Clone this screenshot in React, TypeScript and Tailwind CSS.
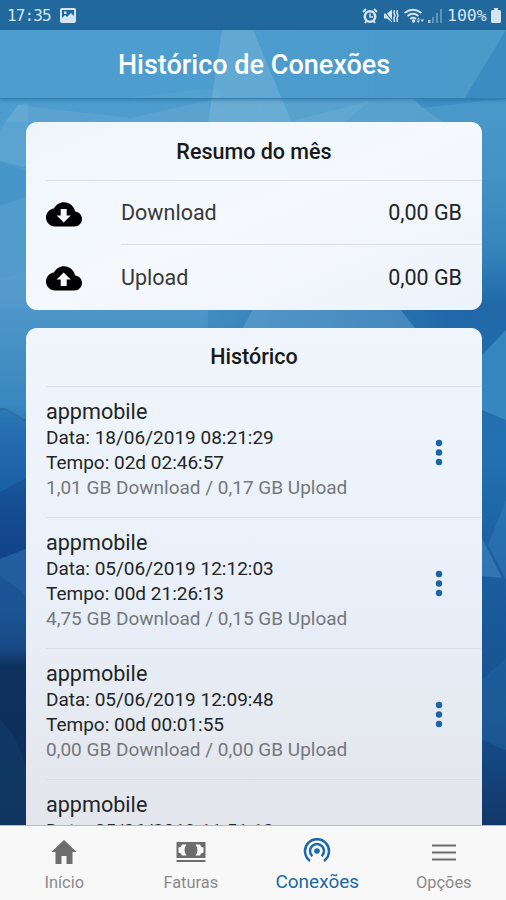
import React, { useState } from "react";

type Session = {
  user: string;
  date: string;
  time: string;
  down: string;
  up: string;
};

const sessions: Session[] = [
  { user: "appmobile", date: "18/06/2019 08:21:29", time: "02d 02:46:57", down: "1,01", up: "0,17" },
  { user: "appmobile", date: "05/06/2019 12:12:03", time: "00d 21:26:13", down: "4,75", up: "0,15" },
  { user: "appmobile", date: "05/06/2019 12:09:48", time: "00d 00:01:55", down: "0,00", up: "0,00" },
  { user: "appmobile", date: "05/06/2019 11:51:12", time: "00d 00:08:10", down: "0,00", up: "0,00" },
];

// Low-poly blue wallpaper behind the whole screen
const Wallpaper = () => (
  <svg
    className="absolute inset-0 w-full h-full"
    viewBox="0 0 506 900"
    preserveAspectRatio="none"
  >
    <defs>
      <linearGradient id="left" x1="0" y1="0" x2="0" y2="1">
        <stop offset="0.1" stopColor="#4d9dce" />
        <stop offset="0.3" stopColor="#529bcb" />
        <stop offset="0.36" stopColor="#4a94c7" />
        <stop offset="0.45" stopColor="#3987bf" />
        <stop offset="0.48" stopColor="#2a73b3" />
        <stop offset="0.54" stopColor="#1f62a6" />
        <stop offset="0.6" stopColor="#1b5698" />
        <stop offset="0.68" stopColor="#1a5493" />
        <stop offset="0.72" stopColor="#174a85" />
        <stop offset="0.74" stopColor="#0e325e" />
        <stop offset="0.92" stopColor="#0d2d55" />
      </linearGradient>
      <linearGradient id="right" x1="0" y1="0" x2="0" y2="1">
        <stop offset="0.1" stopColor="#4a9aca" />
        <stop offset="0.2" stopColor="#4492c4" />
        <stop offset="0.28" stopColor="#3583bb" />
        <stop offset="0.34" stopColor="#2068a7" />
        <stop offset="0.5" stopColor="#2471b1" />
        <stop offset="0.63" stopColor="#1b5e9f" />
        <stop offset="0.8" stopColor="#17508d" />
        <stop offset="0.92" stopColor="#113769" />
      </linearGradient>
      <linearGradient id="mix" x1="0" y1="0" x2="1" y2="0">
        <stop offset="0.4" stopColor="#fff" stopOpacity="0" />
        <stop offset="0.9" stopColor="#fff" />
      </linearGradient>
      <linearGradient id="shade" x1="0" y1="0" x2="0" y2="1">
        <stop offset="0" stopColor="#0e3f83" stopOpacity="0.35" />
        <stop offset="1" stopColor="#0e3f83" stopOpacity="0.75" />
      </linearGradient>
      <mask id="fade">
        <rect width="506" height="900" fill="url(#mix)" />
      </mask>
    </defs>
    <rect width="506" height="900" fill="url(#left)" />
    <rect width="506" height="900" fill="url(#right)" mask="url(#fade)" />
    <path d="M222 30H253L292 123H208Z" fill="#8ec3df" opacity="0.32" />
    <path d="M18 105L130 118L215 99H506L370 101L345 122H5Z" fill="#8ec3df" opacity="0.18" />
    <path d="M130 97L215 88L222 99H130Z" fill="#8ec3df" opacity="0.1" />
    <path d="M288 122L370 101L410 98L443 122Z" fill="#8ec3df" opacity="0.2" />
    <path d="M506 30L464 99H506Z" fill="#1f74b2" opacity="0.35" />
    <path d="M415 99H500L422 108Z" fill="#2c7fb9" opacity="0.35" />
    <path d="M0 130L18 105L28 103V168L0 161Z" fill="#8ec3df" opacity="0.2" />
    <path d="M0 161L28 172V196L0 206Z" fill="#2f83bf" opacity="0.25" />
    <path d="M0 278L28 272V309H0Z" fill="#7db8dc" opacity="0.12" />
    <path d="M208 309H465L470 328H208Z" fill="#1a69aa" opacity="0.18" />
    <path d="M253 309H400L415 328H243Z" fill="#7db8dc" opacity="0.35" />
    <path d="M506 330L482 355V410L506 420Z" fill="#3f95ca" opacity="0.65" />
    <path d="M0 408L28 422V530H0Z" fill="#145aa2" opacity="0.22" />
    <path d="M0 409H5L28 422" fill="none" stroke="#1d5488" strokeWidth="2" opacity="0.4" />
    <path d="M0 492L28 477V548L0 559Z" fill="url(#shade)" />
    <path d="M0 559L28 548V600L20 590L0 576Z" fill="#3474b3" opacity="0.3" />
    <path d="M0 720Q18 735 28 775V826H0Z" fill="#174675" opacity="0.35" />
    <path d="M506 500L488 545L506 580Z" fill="#3f8fc6" opacity="0.3" />
    <path d="M482 538L502 578L482 576Z" fill="#559ccc" opacity="0.4" />
    <path d="M482 680L506 658V750L482 740Z" fill="#2c70ae" opacity="0.3" />
  </svg>
);

const CloudIcon = ({ up }: { up?: boolean }) => (
  <svg className="w-[36px] h-[25px]" viewBox="0 0 36 25">
    <path
      d="M29.1 9.5C28 4.1 23.4 0.3 18 0.3C13.7 0.3 9.9 2.8 8 6.5C3.5 7 0 10.9 0 15.6C0 20.7 4 24.5 9 24.5H28.5C32.6 24.5 36 21.2 36 17C36 13 33 9.8 29.1 9.5Z"
      fill="#000"
    />
    {up ? (
      <path d="M17.7 6.5L24.8 13.6H20.7V20H14.7V13.6H10.6Z" fill="#f5f8fc" />
    ) : (
      <path d="M17.7 20.5L10.6 13.5H14.7V7H20.7V13.5H24.8Z" fill="#f5f8fc" />
    )}
  </svg>
);

const StatusBar = () => (
  <div className="h-[30px] shrink-0 bg-[#21689c] flex items-center justify-between pl-[7px] pr-[5px] pt-px text-[#d3e5f0]">
    <div className="flex items-center gap-[9px]">
      <span className="w-[44px] text-[16px] leading-none tracking-[-0.9px] [font-family:'DejaVu_Sans_Mono',monospace] whitespace-nowrap">
        17:35
      </span>
      <svg className="w-[16px] h-[15px]" viewBox="0 0 16 15">
        <path
          fillRule="evenodd"
          fill="currentColor"
          d="M2 0H14Q16 0 16 2V13Q16 15 14 15H2Q0 15 0 13V2Q0 0 2 0ZM2 2V10L5 7L7 9L11 5L14 8V2ZM4 3.5H6.5V6H4Z"
        />
      </svg>
    </div>
    <div className="flex items-center">
      {/* Alarm */}
      <svg className="w-[16px] h-[16px] mr-[5px]" viewBox="0 0 16 16" fill="none" stroke="currentColor">
        <circle cx="8" cy="8.5" r="5.2" strokeWidth="2.6" />
        <path d="M8 5.5V9H11" strokeWidth="1.5" />
        <path d="M1 4L4 1M15 4L12 1M3 15L4.5 13M13 15L11.5 13" strokeWidth="2" />
      </svg>
      {/* Muted speaker */}
      <svg className="w-[16px] h-[16px] mr-[5px]" viewBox="0 0 16 16" fill="none" stroke="currentColor">
        <path d="M1 5.5H4L9 1.5V14.5L4 10.5H1Z" fill="currentColor" stroke="none" />
        <path d="M0.5 2L10 14" stroke="#21689c" strokeWidth="1.2" />
        <path d="M11.5 2L10.8 4.5L12 7.5L10.8 10.5L11.5 14M14.5 2L13.8 4.5L15 7.5L13.8 10.5L14.5 14" strokeWidth="1.5" />
      </svg>
      {/* Wi-Fi */}
      <svg className="w-[21px] h-[16px] mr-[3px]" viewBox="0 0 21 16" fill="none" stroke="currentColor" strokeWidth="1.8">
        <path d="M0.5 5Q9 -1.5 17.5 5M3.5 8Q9 3.5 14.5 8M6 11Q9 8.5 12 11" />
        <circle cx="9.5" cy="13" r="1.7" fill="currentColor" stroke="none" />
        <path d="M13 11.5L14.5 9.5L16 11.5ZM16.5 11.5H20L18.2 14ZM12.5 12.5H16L14.2 15Z" fill="currentColor" stroke="none" />
      </svg>
      {/* Signal */}
      <svg className="w-[14px] h-[15px] mr-[5px]" viewBox="0 0 14 15">
        <path d="M0 12H2.5V15H0Z" fill="#a4c9df" />
        <path d="M4 9H6V15H4ZM8 5H10V15H8ZM12 1H14V15H12Z" fill="#5c96bd" />
      </svg>
      <span className="w-[41px] mr-[3px] pt-px text-[16.5px] leading-none whitespace-nowrap [font-family:'DejaVu_Sans_Mono',monospace]">
        100%
      </span>
      <svg className="w-[10px] h-[15px]" viewBox="0 0 10 15">
        <path d="M3 0H7V2H8.5Q10 2 10 3.5V13.5Q10 15 8.5 15H1.5Q0 15 0 13.5V3.5Q0 2 1.5 2H3Z" fill="currentColor" />
      </svg>
    </div>
  </div>
);

const SummaryRow = ({ label, value, up }: { label: string; value: string; up?: boolean }) => (
  <div className="flex h-[64px] pl-5 pr-px">
    <div className="w-[75px] flex items-center pt-[3px]">
      <CloudIcon up={up} />
    </div>
    <div
      className={`flex-1 flex items-center justify-between pt-[2px] pr-[19px] text-[21.5px] text-[#35383b] ${
        up ? "" : "border-b border-[#dcdfe3]"
      }`}
    >
      <span>{label}</span>
      <span className="text-[#222426]">{value}</span>
    </div>
  </div>
);

const SessionRow = ({ session }: { session: Session }) => (
  <div className="ml-5 mr-px h-[131px] flex border-b border-[#dcdfe4]">
    <div className="flex-1 pt-[11px] text-[19px] leading-[24.7px] text-[#232527] whitespace-nowrap">
      <h3 className="text-[21.6px] leading-[28px] mb-[0.6px]">{session.user}</h3>
      <p>Data: {session.date}</p>
      <p>Tempo: {session.time}</p>
      <p className="text-[#74777b]">
        {session.down} GB Download / {session.up} GB Upload
      </p>
    </div>
    <button className="w-[20px] mr-[32px] pt-[2px] flex items-center justify-center">
      <svg className="w-[8px] h-[27px]" viewBox="0 0 8 27" fill="#1766a5">
        <circle cx="4" cy="4" r="3.2" />
        <circle cx="4" cy="13.5" r="3.2" />
        <circle cx="4" cy="23" r="3.2" />
      </svg>
    </button>
  </div>
);

const tabs = [
  {
    label: "Início",
    icon: (
      <svg className="w-[26px] h-[28px]" viewBox="0 0 26 28" fill="currentColor">
        <path d="M13 2L25.5 14H21.5V26H15.5V18H10.5V26H4.5V14H0.5Z" />
      </svg>
    ),
  },
  {
    label: "Faturas",
    icon: (
      <svg className="w-[30px] h-[28px]" viewBox="0 0 30 28" fill="currentColor">
        <path
          fillRule="evenodd"
          d="M0.5 4H29.5V20H0.5ZM6 6.5Q5.5 9 2.5 9.5V14.5Q5.5 15 6 17.5H10.5Q8.5 15 8.5 12Q8.5 9 10.5 6.5ZM24 6.5Q24.5 9 27.5 9.5V14.5Q24.5 15 24 17.5H19.5Q21.5 15 21.5 12Q21.5 9 19.5 6.5Z"
        />
        <path d="M0.5 22H29.5V24H0.5Z" />
      </svg>
    ),
  },
  {
    label: "Conexões",
    icon: (
      <svg className="w-[28px] h-[28px]" viewBox="0 0 28 28" fill="none" stroke="currentColor" strokeWidth="2.5">
        <path d="M7 22.9A12 12 0 1 1 21 22.9" />
        <path d="M9.3 18.2A7 7 0 1 1 18.7 18.2" />
        <circle cx="14" cy="13" r="2.8" fill="currentColor" stroke="none" />
      </svg>
    ),
  },
  {
    label: "Opções",
    icon: (
      <svg className="w-[24px] h-[28px]" viewBox="0 0 24 28" stroke="currentColor" strokeWidth="2.2">
        <path d="M0 7.5H24M0 14.5H24M0 21.5H24" />
      </svg>
    ),
  },
];

const App = () => {
  const [active, setActive] = useState("Conexões");

  return (
    <div className="relative w-full h-screen overflow-hidden [font-family:Roboto,sans-serif]">
      <Wallpaper />
      <div className="relative h-full flex flex-col">
        <StatusBar />
        <header className="h-[69px] shrink-0 flex items-center justify-center pt-[3px] border-b border-[#357fae] shadow-[0_1px_4px_rgba(20,80,130,0.45)]">
          <h1 className="text-[27px] font-medium text-white whitespace-nowrap pl-[2px]">
            Histórico de Conexões
          </h1>
        </header>

        <main className="flex-1 min-h-0 overflow-hidden pl-[26px] pt-[23px] pr-[24px]">
          <section className="h-[187.5px] rounded-[11px] bg-gradient-to-br from-[#eef6fc] via-[#f5f9fd] to-[#edf3fb]">
            <h2 className="h-[59px] ml-5 mr-px border-b border-[#dcdfe3] flex items-center justify-center pt-[2px] pr-[19px] text-[21.5px] font-medium text-[#17191b]">
              Resumo do mês
            </h2>
            <SummaryRow label="Download" value="0,00 GB" />
            <SummaryRow label="Upload" value="0,00 GB" up />
          </section>

          <section className="mt-[18px] h-[600px] rounded-t-[11px] bg-[linear-gradient(180deg,#f0f6fc_0px,#ebf2fa_190px,#e8eef8_300px,#e5e9ef_420px,#e3e7ed_500px)]">
            <h2 className="h-[59px] ml-5 mr-px border-b border-[#dcdfe3] flex items-center justify-center pt-px pr-[19px] text-[21.5px] font-medium text-[#17191b]">
              Histórico
            </h2>
            {sessions.map((session, index) => (
              <SessionRow key={index} session={session} />
            ))}
          </section>
        </main>

        <nav className="h-[75px] shrink-0 bg-[#f8f8f8] border-t border-[#b9bdc2]">
          <div className="ml-px -mr-px grid grid-cols-4">
            {tabs.map((tab) => (
              <button
                key={tab.label}
                onClick={() => setActive(tab.label)}
                className={`flex flex-col items-center pt-[12px] ${
                  tab.label === active ? "text-[#1b69a6]" : "text-[#6c6c6c]"
                }`}
              >
                {tab.icon}
                <span
                  className={
                    tab.label === active
                      ? "mt-[4px] text-[19px] leading-[24px]"
                      : "mt-[6px] text-[16.4px] leading-[22px] text-[#8a8a8a]"
                  }
                >
                  {tab.label}
                </span>
              </button>
            ))}
          </div>
        </nav>
      </div>
    </div>
  );
};

export default App;
